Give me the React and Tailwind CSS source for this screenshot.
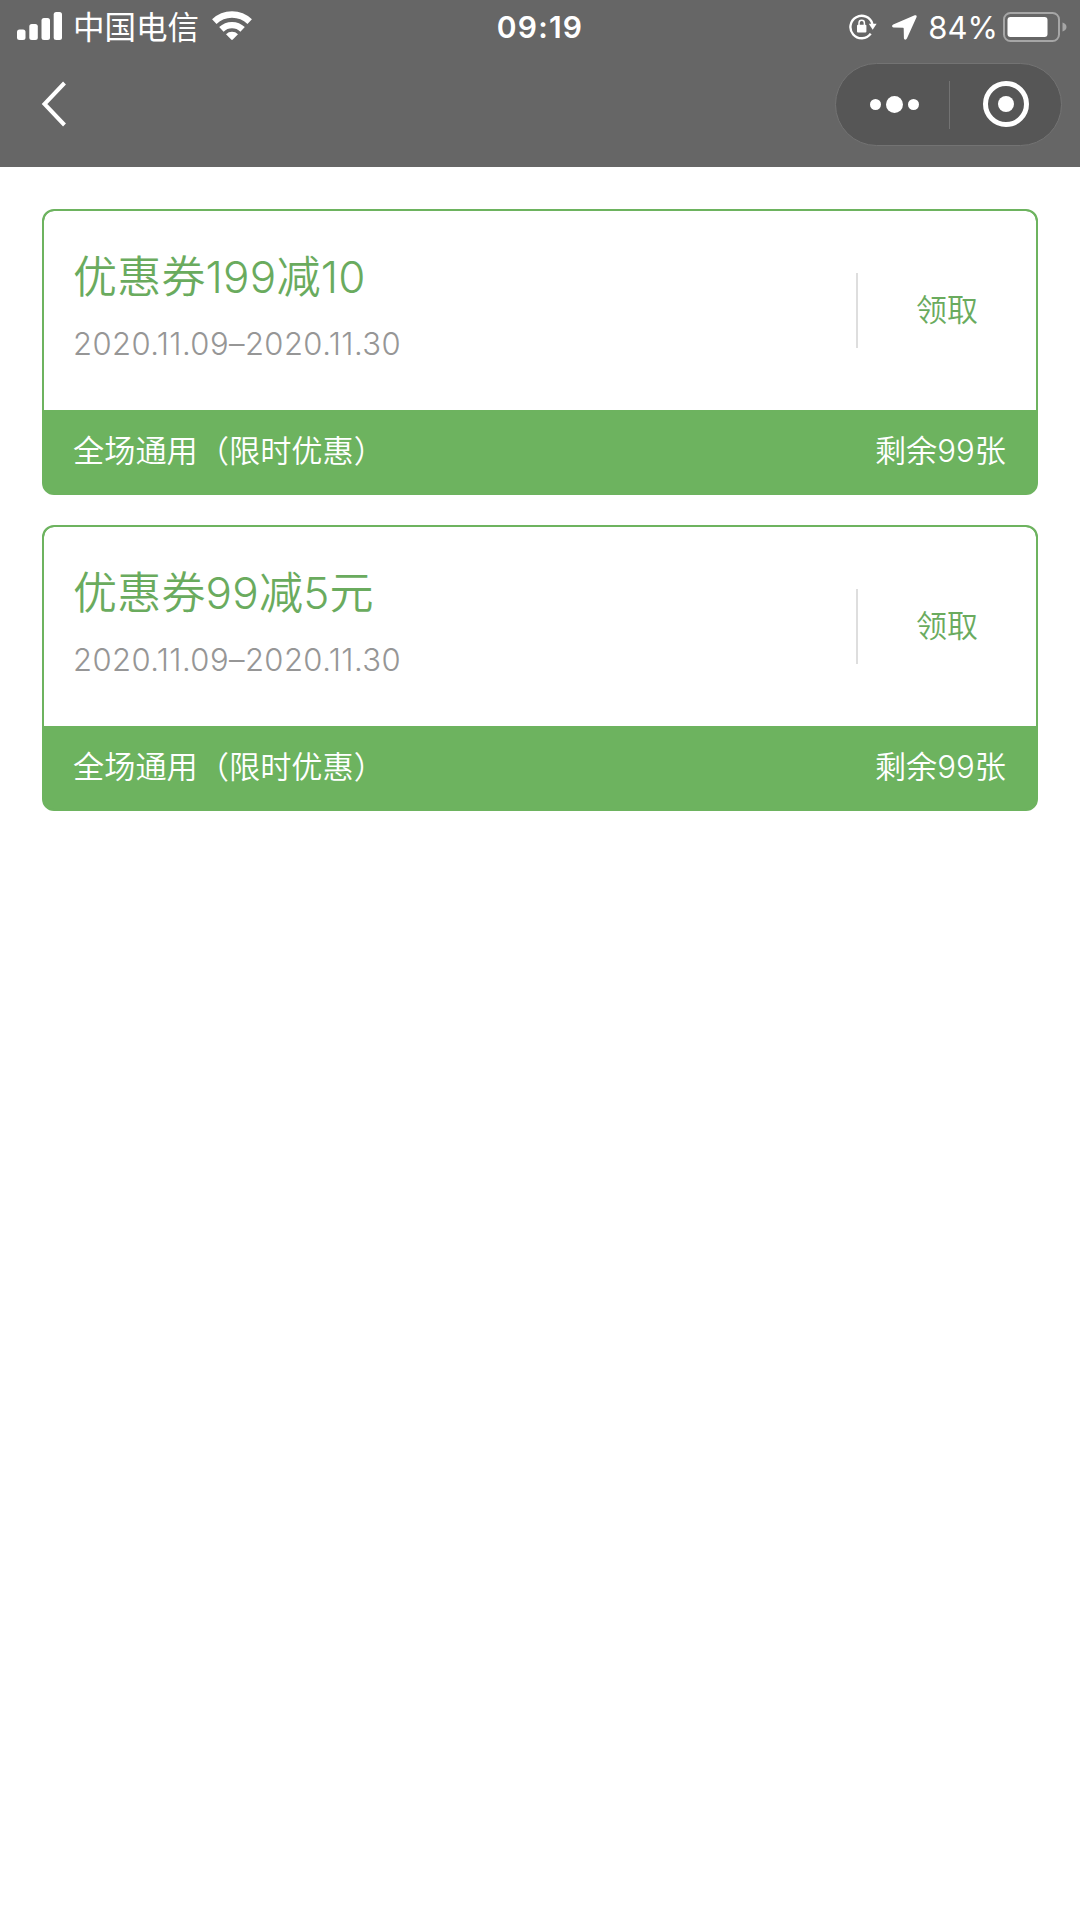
import { useState } from "react";

// ── Data ──────────────────────────────────────────────────────────────────────

const COUPONS = [
  {
    id: 1,
    title: "优惠券199减10",
    period: "2020.11.09–2020.11.30",
    scope: "全场通用（限时优惠）",
    left: 99,
  },
  {
    id: 2,
    title: "优惠券99减5元",
    period: "2020.11.09–2020.11.30",
    scope: "全场通用（限时优惠）",
    left: 99,
  },
];

// ── Icons ─────────────────────────────────────────────────────────────────────

function SignalIcon() {
  return (
    <svg className="w-[45px] h-7" viewBox="0 0 45 28" fill="currentColor">
      <rect x="0" y="17.5" width="8.5" height="10.5" rx="2.5" />
      <rect x="12.3" y="12" width="8.5" height="16" rx="2.5" />
      <rect x="24.5" y="6" width="8.5" height="22" rx="2.5" />
      <rect x="36.7" y="0" width="8.3" height="28" rx="2.5" />
    </svg>
  );
}

function WifiIcon() {
  return (
    <svg className="w-10 h-[30px]" viewBox="0 0 40 30">
      <g fill="none" stroke="currentColor" strokeWidth="6.4">
        <path d="M2.3 10.6a25.5 25.5 0 0 1 35.4 0" />
        <path d="M9.4 18.4a15.3 15.3 0 0 1 21.2 0" />
      </g>
      <path
        d="M14 23.2a8.7 8.7 0 0 1 12 0l-5.2 5.4a1.1 1.1 0 0 1-1.6 0z"
        fill="currentColor"
      />
    </svg>
  );
}

function RotationLockIcon() {
  return (
    <svg className="w-7 h-[26px]" viewBox="0 0 28 26" fill="none">
      <path
        d="M21.7 19.6A11.2 11.2 0 1 1 23.4 10"
        stroke="currentColor"
        strokeWidth="2.4"
      />
      <path d="M19.8 9.8h7.8l-3.9 6z" fill="currentColor" />
      <rect x="8" y="10.8" width="9.4" height="7.6" rx="1" fill="currentColor" />
      <path
        d="M10 11.4V9a2.7 2.7 0 0 1 5.4 0v2.4"
        stroke="currentColor"
        strokeWidth="1.5"
      />
    </svg>
  );
}

function LocationIcon() {
  return (
    <svg className="w-[25px] h-[25px]" viewBox="0 0 25 25" fill="currentColor">
      <path d="M22.7.3 1.2 9.5c-1.7.8-1.4 2.9.4 2.9l9.4.3c.5 0 .7.2.7.7l.2 9.6c.1 2 2.2 2.3 3 .6L24.5 2.2C25.1.8 24.1-.2 22.7.3z" />
    </svg>
  );
}

function BatteryIcon() {
  return (
    <svg className="w-16 h-[30px]" viewBox="0 0 64 30">
      <rect
        x="1"
        y="1"
        width="55"
        height="28"
        rx="6.5"
        fill="none"
        stroke="#a6a6a6"
        strokeWidth="2"
      />
      <rect x="4.5" y="5" width="40" height="20" rx="3" fill="#fff" />
      <path d="M59.5 10.5c2.5.8 4 2.5 4 4.5s-1.5 3.7-4 4.5z" fill="#a6a6a6" />
    </svg>
  );
}

// ── Components ────────────────────────────────────────────────────────────────

function StatusBar() {
  return (
    <div className="grid grid-cols-3 items-center h-[52px] pl-[17px] pr-[13px]">
      <div className="flex items-center">
        <SignalIcon />
        <span className="ml-[11px] mr-[13px] pt-1 text-[31.5px] leading-none whitespace-nowrap">
          中国电信
        </span>
        <WifiIcon />
      </div>
      <span className="pr-1 pt-0.5 text-center text-[30px] leading-none font-semibold tracking-[1.2px]">
        09:19
      </span>
      <div className="flex items-center justify-end pt-0.5">
        <RotationLockIcon />
        <span className="ml-[15px] mr-[11px]">
          <LocationIcon />
        </span>
        <span className="mr-[5px] text-[31px] leading-none">84%</span>
        <BatteryIcon />
      </div>
    </div>
  );
}

function NavBar() {
  return (
    <div className="flex items-start justify-between h-[115px] pl-10 pr-[18px] pt-[11px]">
      <button className="flex items-center h-[82px]" aria-label="返回">
        <svg className="w-[27px] h-[46px]" viewBox="0 0 27 46" fill="none">
          <path d="M24.5 2 4.5 23l20 21" stroke="currentColor" strokeWidth="4" />
        </svg>
      </button>
      <div className="flex items-center w-[227px] h-[83px] rounded-full border border-[#737373] bg-[#565656]">
        <button className="flex items-center justify-center gap-[5px] w-[113px] pl-1">
          <span className="size-[11px] rounded-full bg-white" />
          <span className="size-[17px] rounded-full bg-white" />
          <span className="size-[11px] rounded-full bg-white" />
        </button>
        <span className="w-px h-12 bg-[#737373]" />
        <button className="flex flex-1 items-center justify-center pb-px">
          <span className="flex items-center justify-center size-[46px] rounded-full border-[5px] border-white">
            <span className="size-4 rounded-full bg-white" />
          </span>
        </button>
      </div>
    </div>
  );
}

function CouponCard({ coupon, claimed, onClaim }) {
  return (
    <div className="h-[286px] rounded-xl border-2 border-[#6db35f] bg-[#6db35f] overflow-hidden">
      <div className="flex items-center h-[199px] rounded-t-[10px] bg-white">
        <div className="flex-1 h-full pl-[29px] pt-[40px]">
          <h2 className="text-[44px] leading-[52px] font-[350] tracking-[0.2px] text-[#6aab5e]">
            {coupon.title}
          </h2>
          <p className="mt-[21px] text-[31px] leading-[40px] font-light tracking-[0.42px] text-[#969696]">
            {coupon.period}
          </p>
        </div>
        <span className="w-0.5 h-[75px] bg-[#dedede]" />
        <button
          onClick={() => onClaim(coupon.id)}
          disabled={claimed}
          className="w-[178px] pb-0.5 text-[31px] leading-none font-[350] text-[#6aab5e]"
        >
          领取
        </button>
      </div>
      <div className="flex items-center justify-between h-[83px] pl-[29px] pr-[30px] pb-px text-[31.2px] font-[350] text-white">
        <span>{coupon.scope}</span>
        <span>剩余{coupon.left}张</span>
      </div>
    </div>
  );
}

function App() {
  const [claimed, setClaimed] = useState([]);

  return (
    <div className="min-h-[1920px] bg-white font-['Inter','Noto_Sans_CJK_SC',sans-serif]">
      <header className="h-[167px] bg-[#666666] text-white">
        <StatusBar />
        <NavBar />
      </header>
      <main className="flex flex-col gap-[30px] px-[42px] pt-[42px]">
        {COUPONS.map((c) => (
          <CouponCard
            key={c.id}
            coupon={c}
            claimed={claimed.includes(c.id)}
            onClaim={(id) => setClaimed([...claimed, id])}
          />
        ))}
      </main>
    </div>
  );
}

export default App;
